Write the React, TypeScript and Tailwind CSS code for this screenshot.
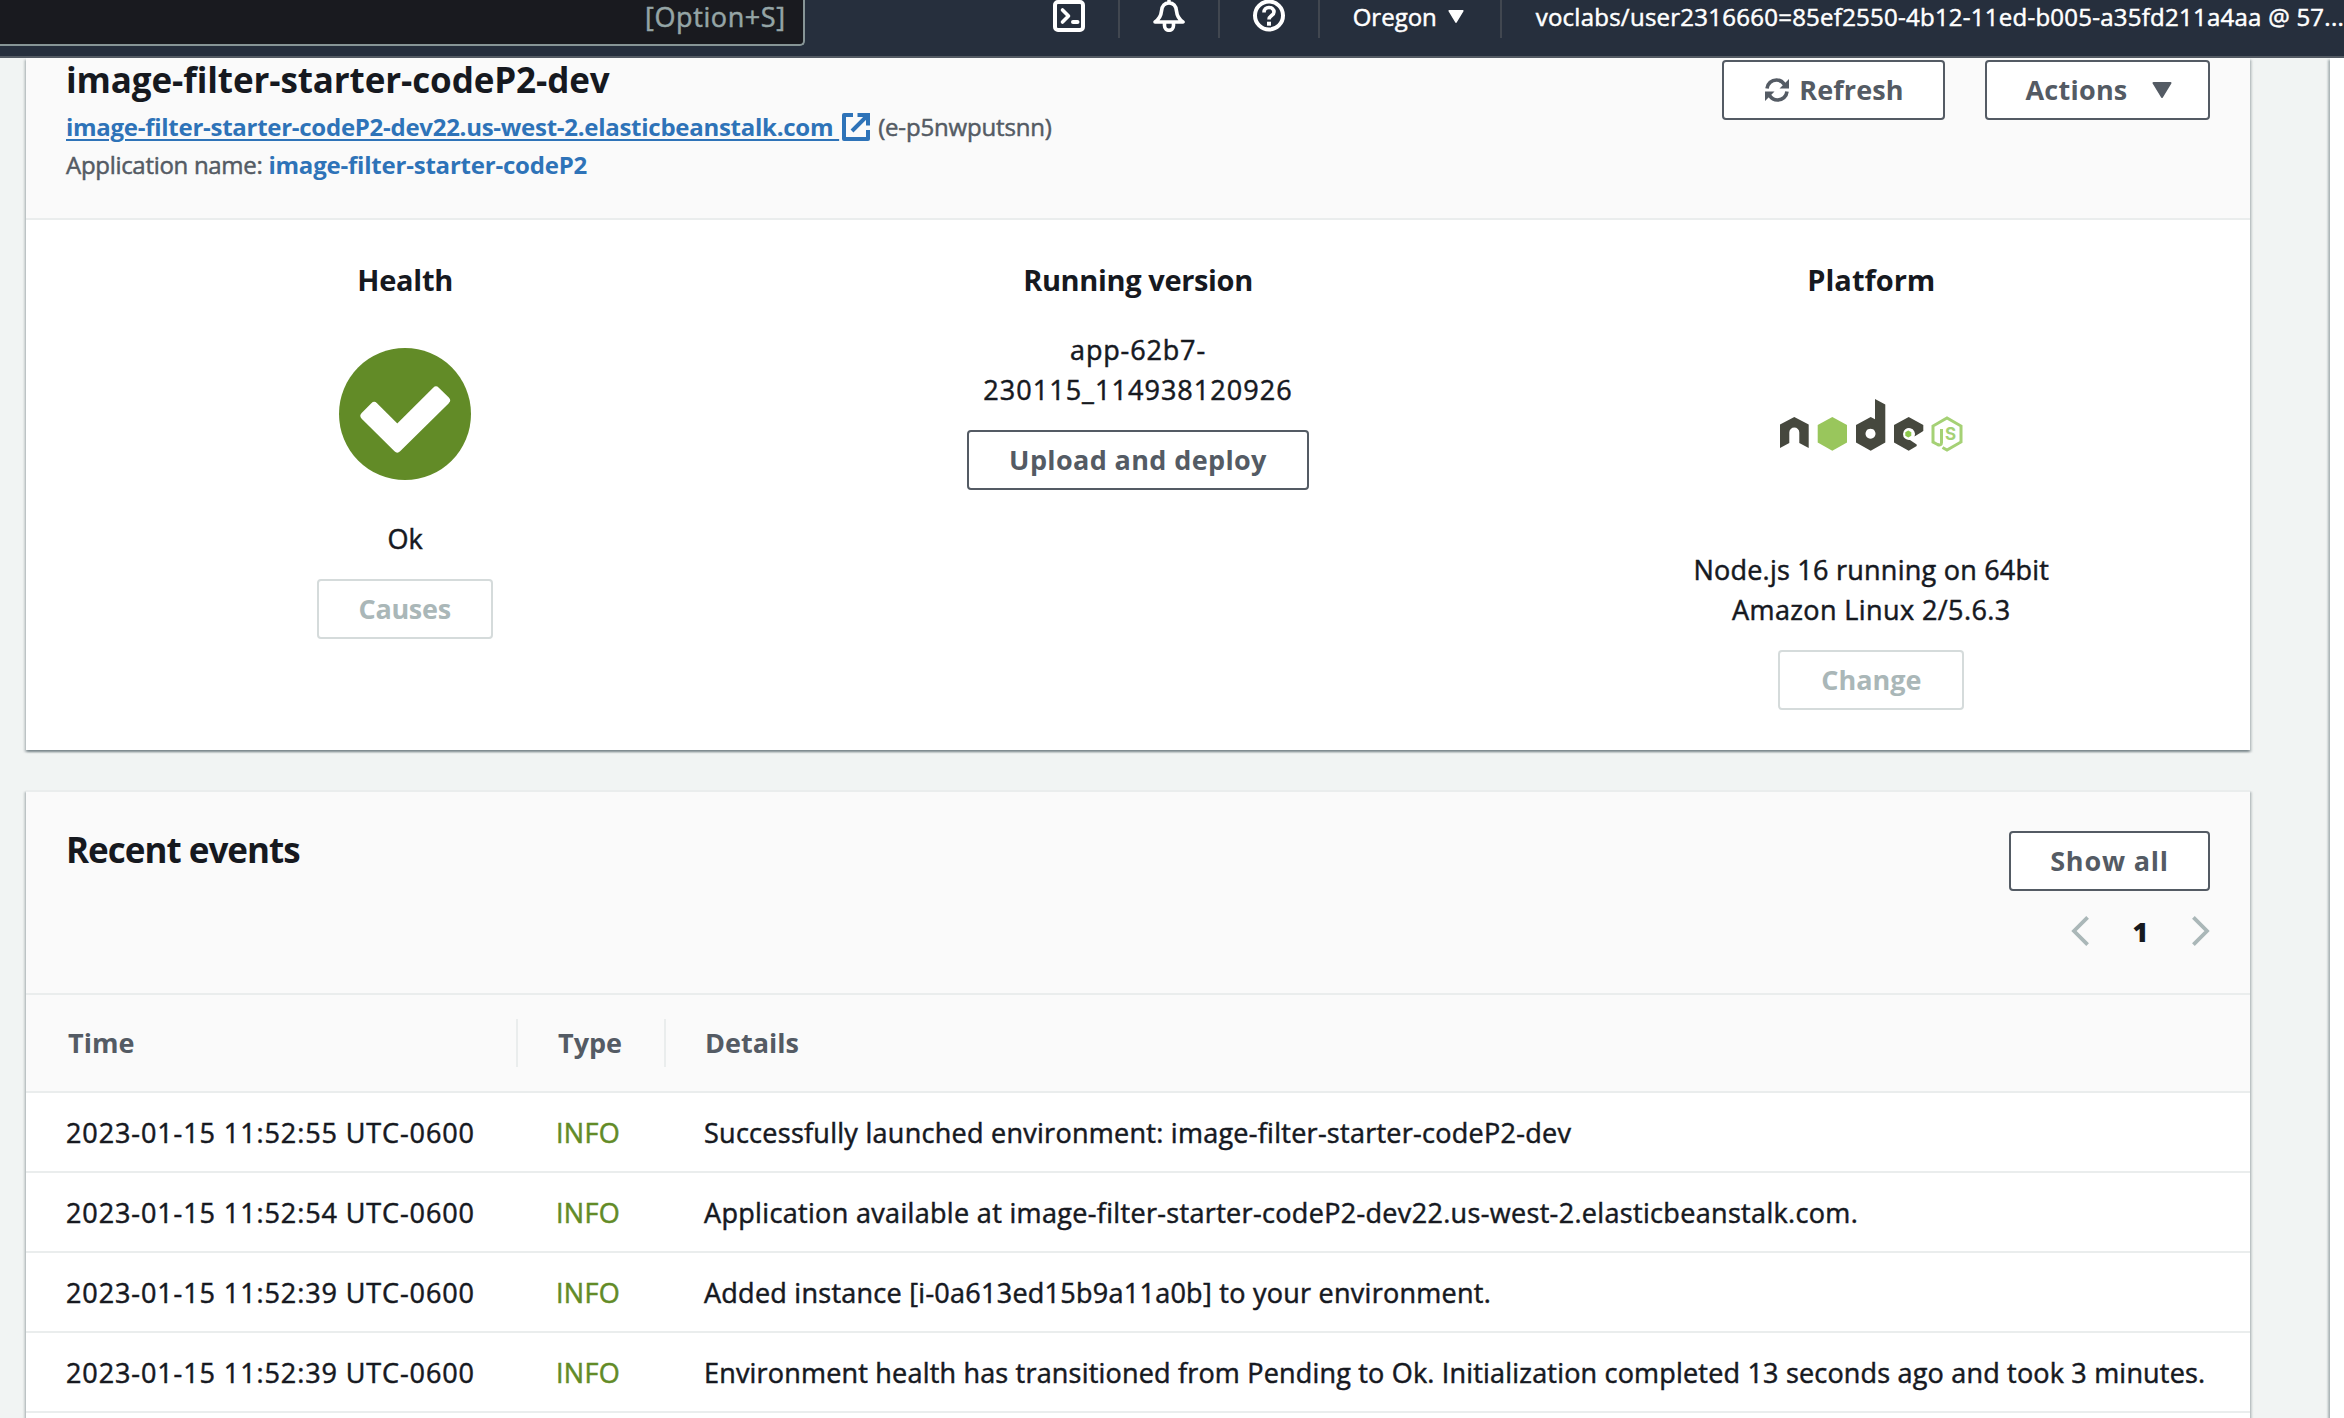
import type { ReactNode } from 'react'

function Button({
  children,
  disabled = false,
  className = '',
}: {
  children: ReactNode
  disabled?: boolean
  className?: string
}) {
  const tone = disabled ? 'border-[#d5dbdb] text-[#aab7b8]' : 'border-[#545b64] text-[#545b64]'
  return (
    <button
      type="button"
      className={`flex h-[60px] shrink-0 items-center justify-center whitespace-nowrap rounded-[4px] border-2 bg-white text-[27px] font-bold ${tone} ${className}`}
    >
      {children}
    </button>
  )
}

function TerminalIcon() {
  return (
    <svg className="h-8 w-8" viewBox="0 0 32 32" fill="none" stroke="#fff" strokeWidth="4" strokeLinejoin="round">
      <rect x="2" y="2" width="28" height="28" rx="3" />
      <path d="M9.500 10l6 6-6 6" strokeWidth="3.600" strokeLinecap="round" />
      <path d="M20 22h4.500" strokeLinecap="round" />
    </svg>
  )
}

function BellIcon() {
  return (
    <svg className="h-8 w-8" viewBox="0 0 32 32" fill="none" stroke="#fff" strokeWidth="3.600" strokeLinejoin="round" strokeLinecap="round">
      <path d="M16 1v2M2 22c4.500-3 6-6 6.500-11 .5-5 3.300-8 7.500-8s7 3 7.500 8c.5 5 2 8 6.500 11z" />
      <path d="M11.500 23v2.500a4.500 4.800 0 0 0 9 0V23" />
    </svg>
  )
}

function HelpIcon() {
  return (
    <svg className="h-8 w-8" viewBox="0 0 32 32" fill="none" stroke="#fff" strokeWidth="4">
      <circle cx="16" cy="15.500" r="14" />
      <path d="M11 12.500c0-3 2-5 5-5s5 1.800 5 4.400c0 3.600-5 3.600-5 7.600" strokeWidth="3.600" />
      <path d="M16 21.700v4" />
    </svg>
  )
}

function ExternalIcon() {
  return (
    <svg className="h-7 w-7" viewBox="0 0 28 28" fill="none" stroke="#2e73b8" strokeWidth="4">
      <path d="M11 2H2v24h24v-9" strokeLinejoin="round" />
      <path d="M15.500 2H26v10.500M25.500 2.500L10 18" />
    </svg>
  )
}

function RefreshIcon() {
  return (
    <svg className="h-6 w-6" viewBox="0 0 24 24" fill="none" stroke="#545b64" strokeWidth="3.600">
      <path d="M2 10.500C2.500 5.500 6.500 2 11.500 2c3.500 0 6 1.500 8 4.500" />
      <path d="M22 13.500C21.500 18.500 17.500 22 12.500 22c-3.500 0-6-1.500-8-4.500" />
      <path d="M24 1v9.500h-9.500zM0 23v-9.500h9.500z" fill="#545b64" stroke="none" />
    </svg>
  )
}

function Caret({ className }: { className: string }) {
  return (
    <svg className={className} viewBox="0 0 20 16" fill="currentColor" stroke="currentColor" strokeWidth="2" strokeLinejoin="round">
      <path d="M1.500 1h17L10 15z" />
    </svg>
  )
}

function HealthyIcon() {
  return (
    <svg className="h-[132px] w-[132px]" viewBox="0 0 132 132">
      <circle cx="66" cy="66" r="66" fill="#628b27" />
      <path
        d="M58.300 100.500L25.500 67.800L35.200 58L58.300 81L97 42.500L107 52.300Z"
        fill="#fff"
        stroke="#fff"
        strokeWidth="8"
        strokeLinejoin="round"
      />
    </svg>
  )
}

function NodeLogo() {
  return (
    <svg className="h-[54px] w-[184px] shrink-0" viewBox="0 0 184 54">
      <g fill="#46483e">
        <path d="M0 25.500L14.300 18L28.700 25.500V49L19.300 44V33.500a5 5 0 0 0-10 0V44L0 49z" />
        <path
          fillRule="evenodd"
          d="M95 0L105.300 5.500V43.500L90.700 51.700L76 43.500V26L90.700 18L95 20.300zM90.500 29.700a5 5 0 1 0 .01 0z"
        />
        <path d="M128.700 18L143.300 26V32L134.500 37.500A6 6 0 1 0 130 41L136.700 45.500V47L128.700 51.700L114 43.500V26z" />
      </g>
      <path d="M52.300 18L67 26V43.500L52.300 51.700L37.700 43.500V26z" fill="#99c65c" />
      <path d="M128.300 31.500l3 1.700v3.600l-3 1.700-3-1.700v-3.600z" fill="#8cc84b" />
      <path
        d="M161.500 30V43.500Q161.500 47 157.500 45.500L153 43V27L167 19L181 27V43L167 51L162.500 48.500"
        fill="none"
        stroke="#a5d175"
        strokeWidth="3"
      />
      <text x="165" y="41" fontFamily="Inter, sans-serif" fontSize="17" fontWeight="700" fill="#a5d175">
        S
      </text>
    </svg>
  )
}

function Chevron({ flip = false }: { flip?: boolean }) {
  return (
    <svg className={`h-[30px] w-[18px] ${flip ? '-scale-x-100' : ''}`} viewBox="0 0 18 30" fill="none" stroke="#aab7b8" strokeWidth="3.800">
      <path d="M16.600 1.400L3 15l13.600 13.600" />
    </svg>
  )
}

function TopBar() {
  return (
    <header className="flex h-[58px] shrink-0 border-b-2 border-[#545b64] bg-[#262f3d] text-[24px] text-white [-webkit-text-stroke:0.5px]">
      <div className="flex h-[46px] w-[805px] justify-end rounded-br-[5px] border-b-2 border-r-2 border-[#879596] bg-[#191a1f] pr-[17px] text-[27px] leading-[34px] tracking-[0.600px] text-[#95a5a6]">
        [Option+S]
      </div>
      <div className="ml-[213px] flex h-[38px]">
        <div className="flex w-[102px] border-r-2 border-[#414750] pl-[35px]"><TerminalIcon /></div>
        <div className="flex w-[100px] border-r-2 border-[#414750] pl-[33px]"><BellIcon /></div>
        <div className="flex w-[100px] border-r-2 border-[#414750] pl-[33px]"><HelpIcon /></div>
        <div className="flex w-[182px] border-r-2 border-[#414750] pl-[33px]">
          <span className="leading-[33px]">Oregon</span>
          <Caret className="ml-[11px] mt-[10px] h-[13px] w-4" />
        </div>
        <div className="whitespace-nowrap pl-[34px] leading-[33px] tracking-[0.250px]">
          voclabs/user2316660=85ef2550-4b12-11ed-b005-a35fd211a4aa @ 57...
        </div>
      </div>
    </header>
  )
}

const cardShadow =
  'shadow-[0_2px_2px_0_rgba(0,28,36,0.3),2px_2px_2px_0_rgba(0,28,36,0.15),-2px_2px_2px_0_rgba(0,28,36,0.15)]'

function EnvironmentCard() {
  return (
    <section className={`h-[692px] bg-white ${cardShadow}`}>
      <div className="flex h-[162px] justify-between border-b-2 border-[#eaeded] bg-[#fafafa] pl-10 pr-10">
        <div className="whitespace-nowrap text-[24px] leading-[38px] text-[#545b64]">
          <h1 className="h-[50px] text-[35px] font-bold leading-[44px] tracking-[-0.110px] text-[#16191f]">
            image-filter-starter-codeP2-dev
          </h1>
          <div className="flex items-center">
            <a className="font-bold leading-[38px] tracking-[-0.270px] text-[#2e73b8] underline decoration-2 underline-offset-[3px]">
              image-filter-starter-codeP2-dev22.us-west-2.elasticbeanstalk.com&nbsp;
            </a>
            <span className="ml-[3px]"><ExternalIcon /></span>
            <span className="ml-[8px] tracking-[-0.170px] [-webkit-text-stroke:0.5px]">(e-p5nwputsnn)</span>
          </div>
          <div>
            <span className="tracking-[-0.300px] [-webkit-text-stroke:0.5px]">Application name: </span>
            <a className="font-bold tracking-[-0.210px] text-[#2e73b8]">image-filter-starter-codeP2</a>
          </div>
        </div>
        <div className="flex gap-10 pt-[2px]">
          <Button className="w-[223px] gap-[10px] pl-[2px] tracking-[0.100px]">
            <RefreshIcon />
            Refresh
          </Button>
          <Button className="w-[225px] gap-[24px] pl-[2px] tracking-[0.250px]">
            Actions
            <Caret className="h-4 w-5" />
          </Button>
        </div>
      </div>
      <div className="grid grid-cols-3 gap-x-[56px] px-10 pt-[38px] text-center text-[27px] leading-[40px]">
        <div className="flex flex-col items-center">
          <h2 className="mb-[46px] pl-px text-[29px] font-bold leading-[44px] tracking-[-0.260px]">Health</h2>
          <HealthyIcon />
          <p className="mb-5 mt-[39px] pl-px [-webkit-text-stroke:0.5px]">Ok</p>
          <Button disabled className="w-[176px] tracking-[-0.300px]">Causes</Button>
        </div>
        <div className="flex flex-col items-center">
          <h2 className="mb-[28px] text-[29px] font-bold leading-[44px] tracking-[-0.370px]">Running version</h2>
          <p className="tracking-[0.850px] [-webkit-text-stroke:0.5px]">app-62b7-</p>
          <p className="mb-5 tracking-[1.040px] [-webkit-text-stroke:0.5px]">230115_114938120926</p>
          <Button className="w-[342px] tracking-[0.370px]">Upload and deploy</Button>
        </div>
        <div className="flex flex-col items-center">
          <h2 className="mb-[97px] text-[29px] font-bold leading-[44px]">Platform</h2>
          <span className="ml-[2px]"><NodeLogo /></span>
          <p className="mt-[97px] tracking-[0.240px] [-webkit-text-stroke:0.5px]">Node.js 16 running on 64bit</p>
          <p className="mb-5 tracking-[0.400px] [-webkit-text-stroke:0.5px]">Amazon Linux 2/5.6.3</p>
          <Button disabled className="w-[186px]">Change</Button>
        </div>
      </div>
    </section>
  )
}

const events = [
  {
    time: '2023-01-15 11:52:55 UTC-0600',
    details: 'Successfully launched environment: image-filter-starter-codeP2-dev',
    tracking: 'tracking-[0.270px]',
  },
  {
    time: '2023-01-15 11:52:54 UTC-0600',
    details: 'Application available at image-filter-starter-codeP2-dev22.us-west-2.elasticbeanstalk.com.',
    tracking: 'tracking-[0.330px]',
  },
  {
    time: '2023-01-15 11:52:39 UTC-0600',
    details: 'Added instance [i-0a613ed15b9a11a0b] to your environment.',
    tracking: 'tracking-[0.260px]',
  },
  {
    time: '2023-01-15 11:52:39 UTC-0600',
    details:
      'Environment health has transitioned from Pending to Ok. Initialization completed 13 seconds ago and took 3 minutes.',
    tracking: 'tracking-[0.190px]',
  },
]

function EventsCard() {
  return (
    <section className={`mt-10 h-[640px] border-t-2 border-[#eaeded] bg-white text-[27px] ${cardShadow}`}>
      <div className="flex h-[203px] justify-between border-b-2 border-[#eaeded] bg-[#fafafa] pl-10 pr-10 pt-[39px]">
        <h2 className="text-[35px] font-bold leading-[38px] tracking-[-1px]">Recent events</h2>
        <div className="flex flex-col items-end">
          <Button className="w-[201px] tracking-[0.800px]">Show all</Button>
          <div className="mt-[20px] flex h-10 w-[139px] items-center justify-between">
            <Chevron />
            <span className="pt-[2px] font-extrabold">1</span>
            <Chevron flip />
          </div>
        </div>
      </div>
      <div className="flex h-[98px] items-center border-b-2 border-[#eaeded] bg-[#fafafa] font-bold leading-[48px] text-[#545b64]">
        <div className="w-[492px] border-r-2 border-[#eaeded] pl-[42px]">Time</div>
        <div className="w-[148px] border-r-2 border-[#eaeded] pl-[40px]">Type</div>
        <div className="pl-[39px]">Details</div>
      </div>
      {events.map(({ time, details, tracking }) => (
        <div
          key={details}
          className="flex h-20 items-center whitespace-nowrap border-b-2 border-[#eaeded] pt-[2px] [-webkit-text-stroke:0.5px]"
        >
          <div className="w-[490px] pl-10 tracking-[0.900px]">{time}</div>
          <div className="w-[188px] pl-[40px] tracking-[0.300px] text-[#628b27]">INFO</div>
          <div className={tracking}>{details}</div>
        </div>
      ))}
    </section>
  )
}

export default function App() {
  return (
    <div className="flex h-[1418px] w-[2344px] flex-col overflow-hidden bg-[#f1f4f3] font-['Open_Sans',sans-serif] text-[#16191f]">
      <TopBar />
      <div className="flex min-h-0 flex-1 justify-between">
        <main className="ml-[26px] w-[2224px]">
          <EnvironmentCard />
          <EventsCard />
        </main>
        <aside className="w-[14px] bg-white shadow-[-2px_2px_2px_0_rgba(0,28,36,0.3)]" />
      </div>
    </div>
  )
}
